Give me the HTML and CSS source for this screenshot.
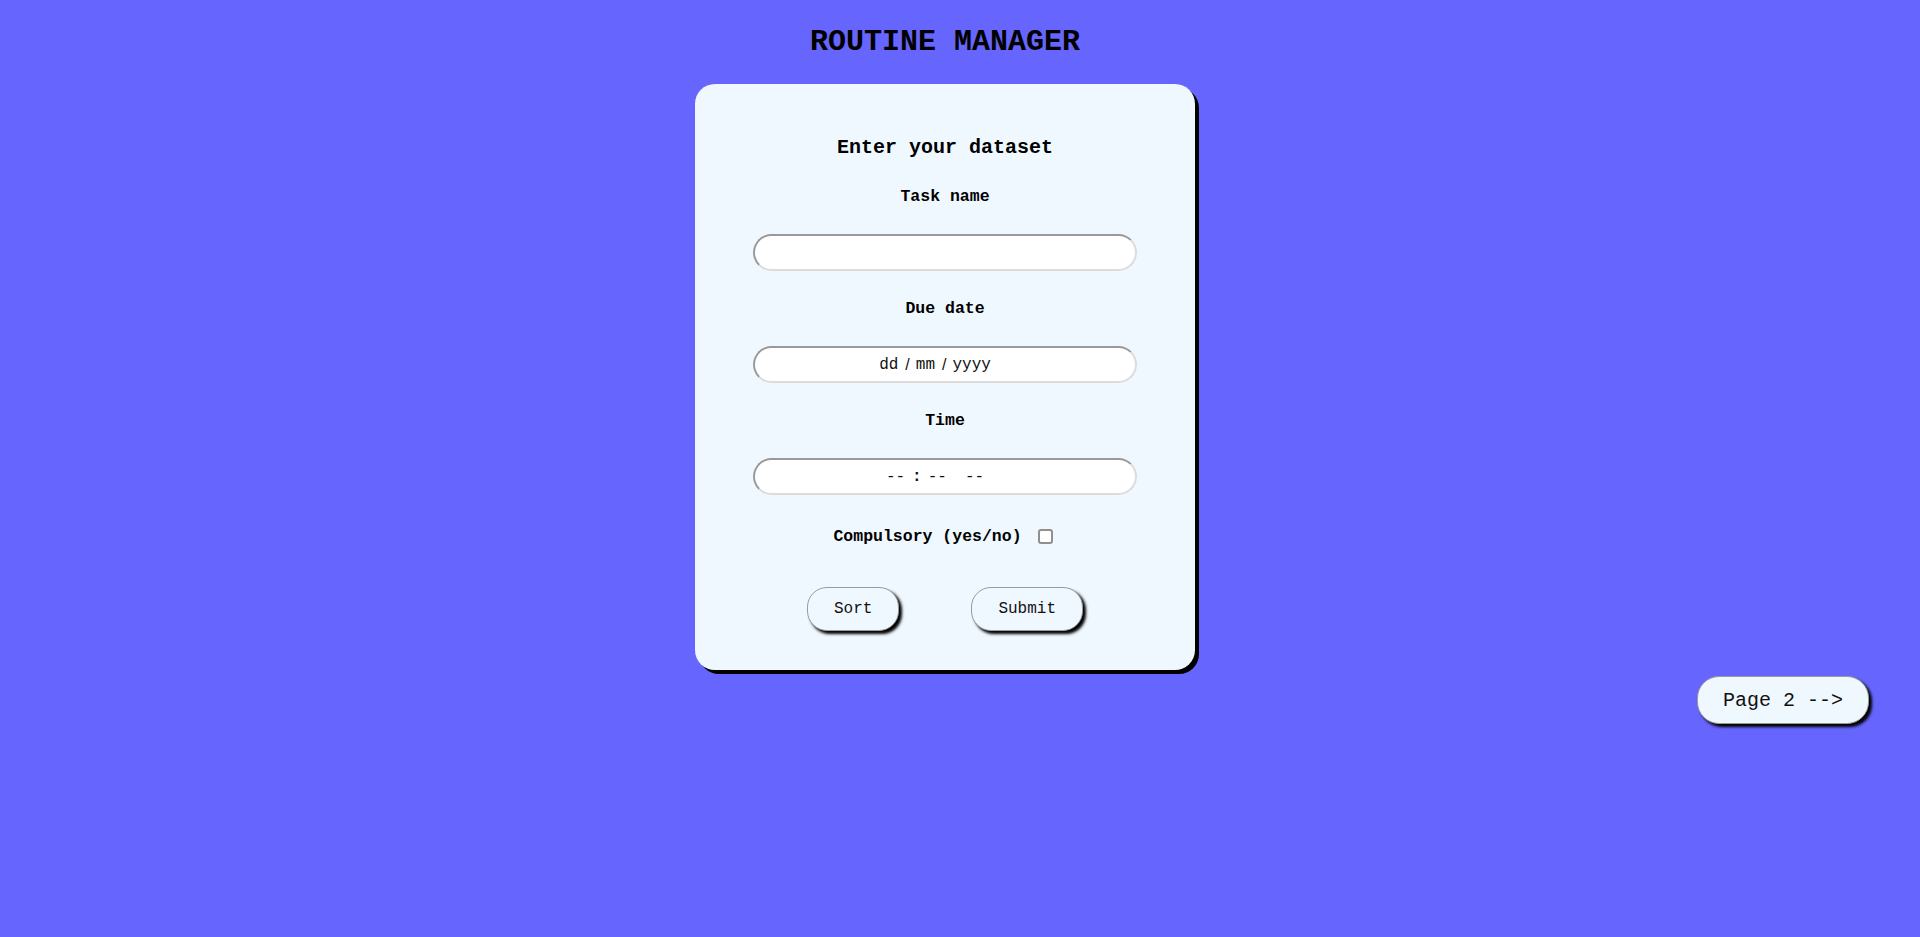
FILE: index.html
```html
<!DOCTYPE html>
<html lang="en">
<head>
<meta charset="utf-8">
<title>Routine Manager</title>
<link rel="stylesheet" href="styles.css">
</head>
<body>
  <main class="page">
    <h1 class="title">ROUTINE MANAGER</h1>
    <form class="card" onsubmit="return false;">
      <h2 class="card-title">Enter your dataset</h2>

      <label class="label" for="task">Task name</label>
      <input class="field" id="task" type="text">

      <label class="label">Due date</label>
      <div class="field field-fake">
        <span>dd</span><span class="slash">/</span><span>mm</span><span class="slash">/</span><span>yyyy</span>
      </div>

      <label class="label">Time</label>
      <div class="field field-fake field-last">
        <span>--</span><span class="colon">:</span><span>--</span><span class="ampm">--</span>
      </div>

      <div class="check-row">
        <label class="label check-label" for="comp">Compulsory (yes/no)</label>
        <input class="check" id="comp" type="checkbox">
      </div>

      <div class="actions">
        <button class="btn" type="button">Sort</button>
        <button class="btn" type="submit">Submit</button>
      </div>
    </form>
  </main>
  <nav class="nav">
    <button class="btn btn-page" type="button">Page 2 --&gt;</button>
  </nav>
</body>
</html>
```

FILE: styles.css
```css
html, body {
  margin: 0;
  padding: 0;
}

body {
  background: #6666ff;
  font-family: "Liberation Mono", "Courier New", monospace;
  color: #000;
  min-height: 937px;
}

.page {
  display: flex;
  flex-direction: column;
  align-items: center;
  padding-right: 30px;
}

.title {
  font-size: 30px;
  line-height: 34px;
  font-weight: bold;
  margin: 25px 0 25px;
}

.card {
  box-sizing: border-box;
  width: 500px;
  height: 586px;
  background: #f0f8ff;
  border-radius: 20px;
  box-shadow: 4px 4px 0 #000;
  padding: 52px 58px 0;
  display: flex;
  flex-direction: column;
  align-items: center;
}

.card-title {
  font-size: 20px;
  line-height: 23px;
  font-weight: bold;
  margin: 0 0 28px;
}

.label {
  font-size: 16.5px;
  line-height: 19px;
  font-weight: bold;
  margin-bottom: 28px;
  display: block;
  text-align: center;
}

.field {
  box-sizing: border-box;
  width: 384px;
  height: 37px;
  background: #fff;
  border: 2px solid;
  border-color: #9a9a9a #dcdcdc #dcdcdc #9a9a9a;
  border-radius: 19px;
  margin: 0 0 28px;
  padding: 0 14px;
  font-family: "Liberation Mono", "Courier New", monospace;
  font-size: 16px;
  outline: none;
}

.field-fake {
  display: flex;
  align-items: center;
  justify-content: center;
  padding-right: 34px;
  color: #111;
}

.field-last {
  margin-bottom: 32px;
}

.slash {
  font-family: "Liberation Sans", Arial, sans-serif;
  margin: 0 6px 0 7px;
}

.colon {
  font-weight: bold;
  margin: 0 6px 0 7px;
}

.ampm {
  margin-left: 18px;
}

.check-row {
  display: flex;
  align-items: center;
  gap: 16px;
  margin-bottom: 41px;
  padding-right: 4px;
}

.check-label {
  margin: 0;
}

.check {
  appearance: none;
  -webkit-appearance: none;
  box-sizing: border-box;
  width: 15px;
  height: 15px;
  margin: 0;
  background: #fff;
  border: 2px solid #8f8f8f;
  border-radius: 3px;
}

.actions {
  display: flex;
  gap: 72px;
}

.btn {
  box-sizing: border-box;
  height: 44px;
  padding: 0 26px;
  background: #f0f8ff;
  border: 1px solid #9a9a9a;
  border-radius: 20px;
  box-shadow: 3px 3px 3px #000;
  font-family: "Liberation Mono", "Courier New", monospace;
  font-size: 16px;
  color: #111;
  cursor: pointer;
}

.nav {
  display: flex;
  justify-content: flex-end;
  padding-right: 51px;
  margin-top: 6px;
}

.btn-page {
  height: 48px;
  padding: 0 25px;
  font-size: 20px;
  border-radius: 22px;
}
```
